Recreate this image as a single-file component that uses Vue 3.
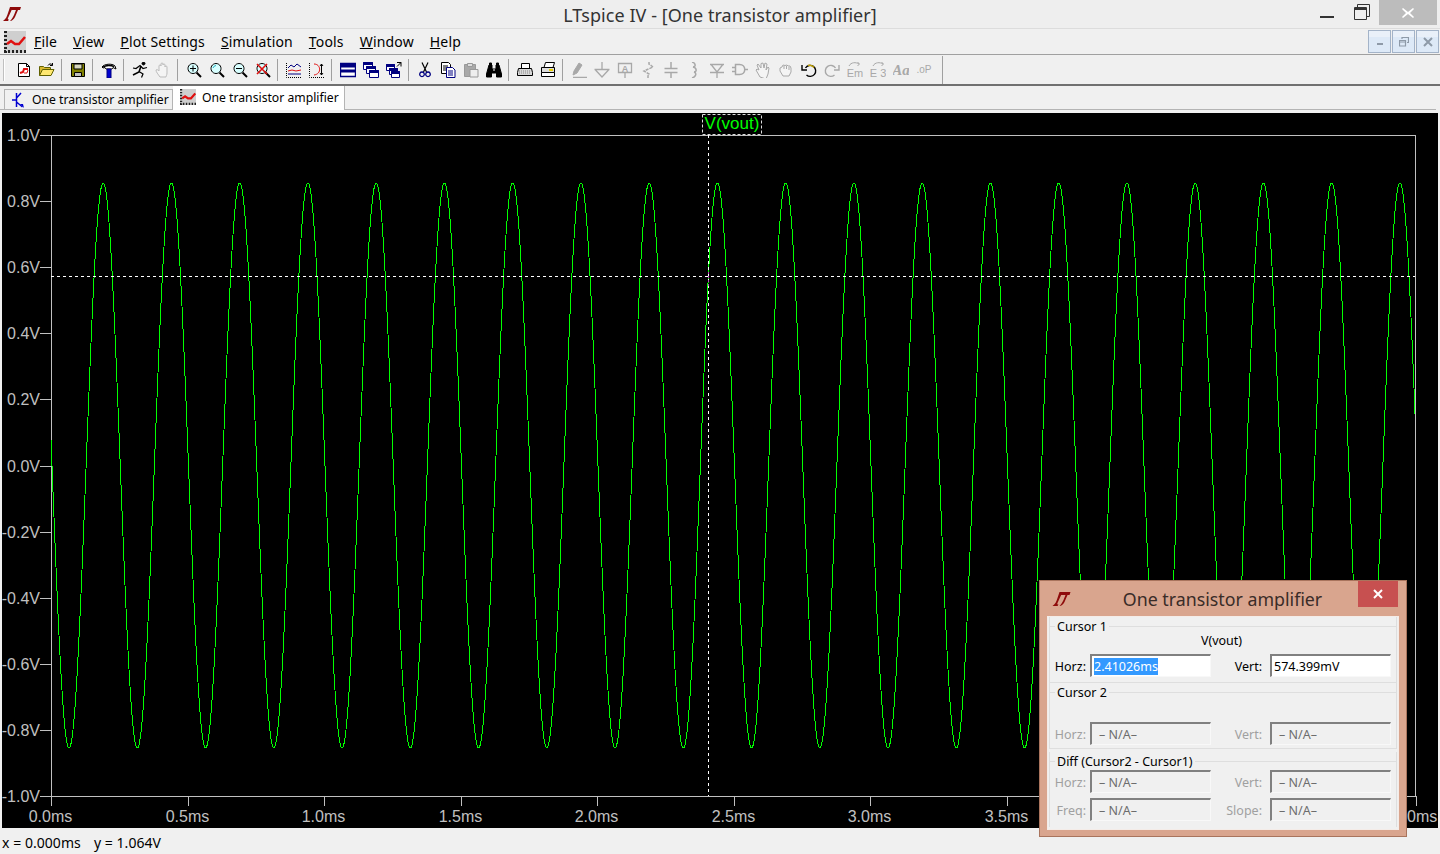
<script setup>
import { computed } from "vue";

const menus = [
    ["F", "ile"],
    ["V", "iew"],
    ["P", "lot Settings"],
    ["S", "imulation"],
    ["T", "ools"],
    ["W", "indow"],
    ["H", "elp"]
];

const GR = "#a8a8a8";
const NV = "#000080";
const CY = "#d8ffff";

const lens = [
    ["M7 1.5a5 5 0 1 0 .01 0z", "#000", CY],
    ["M10.5 10.5l4.5 4.5", "#000", "none", 2]
];

const icons = {
    new: [
        ["M2.5 1.5h8l3 3v10h-11z", "#000", "#fff"],
        ["M10.5 1.5v3h3", "#000", "none"],
        ["M4 11l3-1 1-3h4", "#e01010", "none", 2],
        ["M8 11h3l1-3", "#e01010", "none", 1]
    ],
    open: [
        ["M.5 13.5v-9h4l1 1h6v2", "#606000", "#d8b830"],
        ["M.5 13.5l3-6h11.5l-3 6z", "#606000", "#ffe870"],
        ["M9 3.5c1-2 3-2 4.5-.5", "#000", "none"],
        ["M13.5 1v2.5h-2.5", "#000", "none"]
    ],
    save: [
        ["M1.5 1.5h13v13h-13z", "#000", "#808000"],
        ["M4 2h8v5h-8z", "#000", "#d8d8c0"],
        ["M4.5 10.5h7v4h-7z", "#000", "#c0c0c0"]
    ],
    hammer: [
        ["M1 5c2-3 10-4 13-1l1 3-3-1.5-1 1.5h-6l-1-1.5-2 .5z", "#000", "#fff"],
        ["M2 5c3-2 8-2 11-.5", "#000", "none", 1.5],
        ["M6 7h4v9h-4z", "#000080", "#0000d0"]
    ],
    run: [
        ["M11.5 0a1.5 1.5 0 1 0 .01 0z", "#000", "#000"],
        ["M1 6l3 .5 4-3 3 3 4-1", "#000", "none", 1.2],
        ["M9 4l-2 6-6 3", "#000", "none", 1.6],
        ["M7 9.5l4 2.5-1.5 3.5", "#000", "none", 1.2]
    ],
    hand: [
        ["M5 15c-2-3-4-5-4-7 1-1 2 0 3 1V4a1 1 0 0 1 2 0V2a1 1 0 0 1 2 0V3a1 1 0 0 1 2 0V5a1 1 0 0 1 2 0V11c0 2-1 3-1 4z", "#bbb", "#f4f4f4"]
    ],
    zoomIn: [...lens, ["M4 6.5h6M7 3.5v6", "#000", "none"]],
    zoomFit: [...lens, ["M4 6a3.5 3.5 0 0 1 3-2.5", "#20b0c0", "none"]],
    zoomOut: [...lens, ["M4 6.5h6", "#000", "none"]],
    zoomOff: [...lens, ["M2 2l10 10M12 2l-10 10", "#e01010", "none", 1.6]],
    plotA: [
        ["M.5 1v14.5h15", "#000", "none", 1, "1 1"],
        ["M2 6l3-3 3 2 3-3 4 3", "#000080", "none"],
        ["M2 9l4-1 4 1 5-1", "#e01010", "none"],
        ["M2 12h13", "#000080", "none"]
    ],
    plotB: [
        ["M.5 1v14.5h15", "#000", "none", 1, "1 1"],
        ["M5 2c7 0 8 10 0 11", "#e01010", "none"],
        ["M12.5 2v11M11 4l1.5-2 1.5 2M11 11l1.5 2 1.5-2", "#000", "none"]
    ],
    tile: [
        ["M.5 1.5h15v13h-15z", NV, "#fff", 1.4],
        ["M1 2h14v3h-14zM1 8h14v2h-14z", NV, NV]
    ],
    cascade: [
        ["M.5 .5h9v7h-9z", NV, "#fff"],
        ["M.5 .5h9v2h-9z", NV, NV],
        ["M3.5 4.5h9v7h-9z", NV, "#fff"],
        ["M3.5 4.5h9v2h-9z", NV, NV],
        ["M6.5 8.5h9v7h-9z", NV, "#fff"],
        ["M6.5 8.5h9v2h-9z", NV, NV]
    ],
    cascadeUp: [
        ["M.5 2.5h8v6h-8z", NV, "#fff"],
        ["M.5 2.5h8v2h-8z", NV, NV],
        ["M3.5 6.5h8v6h-8z", NV, "#fff"],
        ["M3.5 6.5h8v2h-8z", NV, NV],
        ["M5.5 9.5h8v6h-8z", NV, "#fff"],
        ["M5.5 9.5h8v2h-8z", NV, NV],
        ["M11 .5h4v4M15 .5l-4 4", "#000", "none"]
    ],
    cut: [
        ["M5 .5l4.5 9.5M11 .5l-4.5 9.5", "#000", "none", 1.2],
        ["M5 10a2.3 2.3 0 1 0 .01 0zM11 10a2.3 2.3 0 1 0 .01 0z", NV, "none", 1.3]
    ],
    copy: [
        ["M1.5 .5h7l2 2v9h-9z", "#000", "#fff"],
        ["M3 4h5M3 6h5M3 8h5", "#000", "none"],
        ["M6.5 5.5h6l2.5 2.5v7.5h-8.5z", NV, "#fff"],
        ["M8 9h5M8 11h5M8 13h5", NV, "none"]
    ],
    paste: [
        ["M1.5 2.5h11v12h-11z", "#999", GR],
        ["M4.5 1.5h5v3h-5z", "#999", "#ddd"],
        ["M7 7.5h8v7.5h-8z", "#999", "#eee"]
    ],
    find: [
        ["M3 3h3v4h4v-4h3l2.5 9v3h-5v-4h-5v4h-5v-3z", "#000", "#000"],
        ["M3.5 1h2v2h-2zM10.5 1h2v2h-2z", "#000", "#000"],
        ["M7 8h2", "#fff", "none"]
    ],
    preview: [
        ["M4.5 1.5h8v5h-8z", "#000", "#fff"],
        ["M1.5 6.5h13l1 4v3h-15v-3z", "#000", "#d8d8d8"],
        ["M2 9h12M2 11h12", "#888", "none", 1, "1 1"]
    ],
    print: [
        ["M5.5 .5h9l-1.5 5h-9z", "#000", "#fff"],
        ["M1.5 5.5h13v5h-13z", "#000", "#ddd"],
        ["M1.5 10.5h13v4h-13z", "#000", "#fff"],
        ["M9 8h4", "#e8d000", "none", 2]
    ],
    wire: [
        ["M2 15.5h14", GR, "none", 1.5],
        ["M2 13l1-4 5-8 3 2-5 8z", GR, GR]
    ],
    ground: [["M8 0v7M.5 7.5h15M1.5 8l6.5 7 6.5-7", GR, "none", 1.3]],
    label: [
        ["M1.5 1.5h13v9h-13zM8 11v5", GR, "none", 1.3],
        { t: "A", x: 8, y: 9.5, size: 9, anchor: "middle" }
    ],
    res: [["M9 0v2l4 3-9 4 5 3-1 2v2", GR, "none", 1.5, "3 1"]],
    cap: [["M8 0v6M1.5 6.5h13M1.5 10.5h13M8 11v5", GR, "none", 1.5]],
    ind: [["M6 0c4 1 4 5 1 5M7 5c4 1 4 5 1 5M8 10c3 1 2 5-2 6", GR, "none", 1.5]],
    diode: [["M1 2.5h14M2.5 3l5.5 7 5.5-7M1 10.5h14M8 11v5", GR, "none", 1.3]],
    comp: [["M3.5 2.5h4c7 0 7 10 0 10h-4zM0 5.5h3.5M0 9.5h3.5M13 7.5h3", GR, "none", 1.5]],
    handOpen: [
        ["M5 15l-4-7 1-1 2 1-2-5 1-1 3 4V1.5l2-.5 1 5 1-5 2 1-1 6 2-3 1 1-1 6-2 5z", GR, "#f4f4f4"]
    ],
    handGrab: [
        ["M5 14l-3-5v-3l2-1 1-2 2 .5 2-.5 1 1 2 0 1 2v4l-2 4z", GR, "#f4f4f4"],
        ["M6 4v3M8.5 4v3M11 5v3", GR, "none"]
    ],
    undo: [
        ["M4.5 6a5.5 5.5 0 1 1 1 7", "#000", "none", 1.4],
        ["M7 3.5a5.5 5.5 0 0 1 6 2", "#c0a000", "none", 1.4],
        ["M1 3v5h5", "#000", "none", 1.4]
    ],
    redo: [
        ["M11.5 6a5.5 5.5 0 1 0-1 7", GR, "none", 1.4],
        ["M15 3v5h-5", GR, "none", 1.4]
    ],
    moveText: [
        ["M2 4c2-4 7-4 10-2", GR, "none"],
        ["M10.5 0l2 2-2 2", GR, "none"],
        { t: "Em", x: 8, y: 14.5, size: 11, anchor: "middle", thin: true }
    ],
    dragText: [
        ["M3 4c2-4 7-4 10-2", GR, "none"],
        ["M11.5 0l2 2-2 2", GR, "none"],
        { t: "E 3", x: 8, y: 14.5, size: 11, anchor: "middle", thin: true }
    ],
    font: [{ t: "Aa", x: 8, y: 13, size: 15, anchor: "middle", italic: true }],
    op: [{ t: ".oP", x: 8, y: 11, size: 10, anchor: "middle", thin: true }]
};

const toolbar = [
    "new", "open", "|", "save", "|", "hammer", "|", "run", "hand", "|",
    "zoomIn", "zoomFit", "zoomOut", "zoomOff", "|", "plotA", "plotB", "|",
    "tile", "cascade", "cascadeUp", "|", "cut", "copy", "paste", "find", "|",
    "preview", "print", "|", "wire", "ground", "label", "res", "cap", "ind",
    "diode", "comp", "handOpen", "handGrab", "undo", "redo", "moveText",
    "dragText", "font", "op", "end"
];

// screen coords of the plot frame
const X0 = 51;
const X1 = 1415;
const Y_TOP = 135;
const Y_BOT = 796;
const PX_PER_MS = 273;

const yTicks = [1, 0.8, 0.6, 0.4, 0.2, 0, -0.2, -0.4, -0.6, -0.8, -1].map((v) => ({
    label: v.toFixed(1) + "V",
    y: Math.round(Y_BOT - ((v + 1) / 2) * (Y_BOT - Y_TOP))
}));

// 4.0ms and 4.5ms sit behind the cursor dialog
const xTicks = [0, 0.5, 1, 1.5, 2, 2.5, 3, 3.5, 5].map((v) => ({
    label: v.toFixed(1) + "ms",
    x: Math.round(X0 + v * PX_PER_MS)
}));

const wave = computed(() => {
    const mid = (Y_TOP + Y_BOT) / 2;
    const amp = (0.855 * (Y_BOT - Y_TOP)) / 2;
    const pts = [];
    for (let x = X0; x <= X1; x++) {
        const t = (x - X0 - 1) / PX_PER_MS;
        pts.push(x + "," + (mid + amp * Math.sin(2 * Math.PI * 4 * t)).toFixed(1));
    }
    return pts.join(" ");
});
</script>

<template>
    <div class="app">
        <header class="titlebar">
            <svg class="logo" viewBox="0 0 18 14" width="18" height="14">
                <path d="M0 14C3 12 4 9 5 6L7 0h3L5 11c-.5 1 0 1.5 1 1.5L5 14z" fill="#8e0b0b" />
                <path d="M9 0h9l-1 3h-2l-3 7c-1 2-3 4-5 4 2-2 3-4 4-6l2-5H8z" fill="#8e0b0b" />
            </svg>
            <div class="title">LTspice IV - [One transistor amplifier]</div>
            <div class="win-controls">
                <span class="win-min"></span>
                <svg class="win-restore" viewBox="0 0 16 16" width="16" height="16">
                    <path d="M3.5 3.5v-3h12v12h-3" fill="none" stroke="#333" />
                    <path d="M.5 3.5h12v12H.5z" fill="none" stroke="#333" />
                    <path d="M1 4h11v2H1z" fill="#333" />
                </svg>
                <span class="win-close">
                    <svg viewBox="0 0 12 10" width="12" height="10">
                        <path d="M1 0l5 4 5-4 1 1-4 4 4 4-1 1-5-4-5 4-1-1 4-4-4-4z" fill="#fff" />
                    </svg>
                </span>
            </div>
        </header>

        <nav class="menubar">
            <svg class="plot-icon" viewBox="0 0 22 22" width="22" height="22">
                <path d="M0 0h22v22H0z" fill="#cfcfcf" />
                <path d="M1.5 0v22M0 20.5h22" stroke="#222" stroke-width="3" stroke-dasharray="2 2" />
                <path d="M3 13l4-3 4 3h4l6-7" fill="none" stroke="#e01010" stroke-width="2.5" />
            </svg>
            <ul class="menu">
                <li v-for="m in menus" :key="m[0]"><u>{{ m[0] }}</u>{{ m[1] }}</li>
            </ul>
            <div class="mdi-buttons">
                <button class="mdi"><i class="mdi-dash"></i></button>
                <button class="mdi">
                    <svg viewBox="0 0 10 10" width="10" height="10">
                        <path d="M3 2V.5h6.5v5H8M.5 3.5h6v5.5h-6zM.5 5h6" fill="none" stroke="#8e9aa8" stroke-width="1.2" />
                    </svg>
                </button>
                <button class="mdi">
                    <svg viewBox="0 0 10 10" width="10" height="10">
                        <path d="M1 1l8 8M9 1l-8 8" stroke="#8e9aa8" stroke-width="2" />
                    </svg>
                </button>
            </div>
        </nav>

        <div class="toolbar">
            <span class="grip"></span>
            <template v-for="(name, i) in toolbar" :key="i">
                <span v-if="name === '|'" class="sep"></span>
                <span v-else-if="name === 'end'" class="toolbar-end"></span>
                <span v-else class="tool">
                    <svg viewBox="0 0 16 16" width="16" height="16">
                        <template v-for="(el, j) in icons[name]" :key="j">
                            <text
                                v-if="el.t"
                                class="icon-text"
                                :class="{ italic: el.italic, thin: el.thin }"
                                :x="el.x"
                                :y="el.y"
                                :font-size="el.size"
                                :text-anchor="el.anchor"
                            >{{ el.t }}</text>
                            <path
                                v-else
                                :d="el[0]"
                                :stroke="el[1]"
                                :fill="el[2]"
                                :stroke-width="el[3] || 1"
                                :stroke-dasharray="el[4]"
                            />
                        </template>
                    </svg>
                </span>
            </template>
        </div>

        <div class="tabstrip">
            <div class="tab">
                <svg viewBox="0 0 14 16" width="14" height="16">
                    <path d="M4.5 1v14M4 8H0M4.5 6L9 1M4.5 10l6 5" fill="none" stroke="#0000d0" stroke-width="1.5" />
                    <path d="M8 12l4 4-1-4z" fill="#0000d0" />
                </svg>
                <span>One transistor amplifier</span>
            </div>
            <div class="tab active">
                <svg viewBox="0 0 22 22" width="16" height="16">
                    <path d="M0 0h22v22H0z" fill="#cfcfcf" />
                    <path d="M1.5 0v22M0 20.5h22" stroke="#222" stroke-width="3" stroke-dasharray="2 2" />
                    <path d="M3 13l4-3 4 3h4l6-7" fill="none" stroke="#e01010" stroke-width="3" />
                </svg>
                <span>One transistor amplifier</span>
            </div>
        </div>

        <main class="plot-area">
            <svg class="plot" viewBox="2 113 1436 715" width="1436" height="715">
                <rect :x="X0 + 0.5" :y="Y_TOP + 0.5" :width="X1 - X0" :height="Y_BOT - Y_TOP" fill="none" stroke="#c0c0c0" />
                <g v-for="t in yTicks" :key="t.label">
                    <path :d="`M40 ${t.y + 0.5}H${X0}`" stroke="#c0c0c0" />
                    <text class="axis" x="40" :y="t.y + 6" text-anchor="end">{{ t.label }}</text>
                </g>
                <g v-for="t in xTicks" :key="t.label">
                    <path :d="`M${t.x + 0.5} ${Y_BOT}v10`" stroke="#c0c0c0" />
                    <text class="axis" :x="t.x - 0.5" y="822" text-anchor="middle">{{ t.label }}</text>
                </g>
                <polyline class="trace" :points="wave" />
                <path class="cursor" d="M708.5 135V796M51 276.5H1415" />
                <path d="M708.5 272v14" stroke="#c040c0" stroke-dasharray="2 2" />
                <rect class="trace-box" x="702.5" y="114.5" width="59" height="20" />
                <text class="trace-name" x="732" y="129" text-anchor="middle">V(vout)</text>
            </svg>

            <section class="cursor-dialog">
                <div class="dialog-head">
                    <svg viewBox="0 0 18 14" width="19" height="14">
                        <path d="M0 14C3 12 4 9 5 6L7 0h3L5 11c-.5 1 0 1.5 1 1.5L5 14z" fill="#8e0b0b" />
                        <path d="M9 0h9l-1 3h-2l-3 7c-1 2-3 4-5 4 2-2 3-4 4-6l2-5H8z" fill="#8e0b0b" />
                    </svg>
                    <span class="dialog-title">One transistor amplifier</span>
                    <span class="dialog-close">
                        <svg viewBox="0 0 10 10" width="10" height="10">
                            <path d="M1 1l8 8M9 1l-8 8" stroke="#fff" stroke-width="2" />
                        </svg>
                    </span>
                </div>
                <div class="dialog-body">
                    <div class="group group-one">
                        <div class="legend"><span>Cursor 1</span></div>
                        <div class="signal">V(vout)</div>
                        <div class="row">
                            <label>Horz:</label>
                            <div class="field"><span class="selected">2.41026ms</span></div>
                            <label>Vert:</label>
                            <div class="field">574.399mV</div>
                        </div>
                    </div>
                    <div class="group group-two">
                        <div class="legend"><span>Cursor 2</span></div>
                        <div class="row off">
                            <label>Horz:</label>
                            <div class="field">– N/A–</div>
                            <label>Vert:</label>
                            <div class="field">– N/A–</div>
                        </div>
                    </div>
                    <div class="group group-diff">
                        <div class="legend"><span>Diff (Cursor2 - Cursor1)</span></div>
                        <div class="row off">
                            <label>Horz:</label>
                            <div class="field">– N/A–</div>
                            <label>Vert:</label>
                            <div class="field">– N/A–</div>
                        </div>
                        <div class="row off">
                            <label>Freq:</label>
                            <div class="field">– N/A–</div>
                            <label>Slope:</label>
                            <div class="field">– N/A–</div>
                        </div>
                    </div>
                </div>
            </section>
        </main>

        <footer class="status">x = 0.000ms &nbsp;&nbsp;<span class="status-y">y = 1.064V</span></footer>
    </div>
</template>

<style>
html,
body {
    margin: 0;
    background: #f0f0f0;
}
</style>

<style scoped>
.app {
    width: 1440px;
    height: 854px;
    display: flex;
    flex-direction: column;
    overflow: hidden;
    background: #f0f0f0;
    color: #000;
    font-family: "Noto Sans", "Liberation Sans", sans-serif;
    font-size: 13px;
}

.titlebar {
    height: 28px;
    flex: none;
    display: grid;
    grid-template-columns: 1fr auto 1fr;
    align-items: start;
    background: #eeeeee;
    border-bottom: 1px solid #dcdcdc;
}

.logo {
    margin: 7px 0 0 3px;
}

.title {
    font-size: 18px;
    letter-spacing: 0.05px;
    line-height: 30px;
    color: #333;
}

.win-controls {
    display: flex;
    justify-content: flex-end;
    align-items: flex-start;
    padding-right: 3px;
}

.win-min {
    width: 14px;
    height: 2px;
    margin: 16px 20px 0 0;
    background: #333;
}

.win-restore {
    margin: 4px 9px 0 0;
}

.win-close {
    width: 58px;
    height: 25px;
    display: flex;
    align-items: center;
    justify-content: center;
    background: #bcbcbc;
}

.menubar {
    height: 25px;
    flex: none;
    display: flex;
    align-items: center;
    padding-left: 4px;
    border-bottom: 1px solid #a0a0a0;
}

.plot-icon {
    flex: none;
}

.menu {
    display: flex;
    gap: 16px;
    list-style: none;
    margin: 0 0 0 8px;
    padding: 0;
    font-size: 14px;
    letter-spacing: 0.16px;
    line-height: 25px;
    flex: 1;
}

.mdi-buttons {
    display: flex;
    gap: 1px;
    margin-right: 1px;
}

.mdi {
    width: 23px;
    height: 23px;
    display: flex;
    align-items: center;
    justify-content: center;
    padding: 0;
    border: 1px solid #a3b3c8;
    background: linear-gradient(#e9f0f9 0 30%, #dde9f7 30%);
}

.mdi-dash {
    width: 6px;
    height: 2px;
    margin-top: 5px;
    background: #8e9aa8;
}

.toolbar {
    height: 29px;
    flex: none;
    display: flex;
    align-items: center;
    border-bottom: 2px solid #707070;
    box-sizing: content-box;
}

.grip {
    width: 1px;
    height: 22px;
    margin: 0 7px 0 3px;
    background: #c0c0c0;
    border-right: 1px solid #fff;
}

.tool {
    width: 23px;
    height: 22px;
    flex: none;
    display: flex;
    align-items: center;
    justify-content: center;
}

.sep {
    width: 1px;
    height: 22px;
    margin: 0 4px 0 3px;
    background: #a0a0a0;
    flex: none;
}

.toolbar-end {
    width: 1px;
    height: 28px;
    margin-left: 7px;
    background: #a0a0a0;
}

.icon-text {
    fill: #a8a8a8;
    font-family: "Liberation Sans", sans-serif;
    font-weight: 700;
}

.icon-text.thin {
    font-weight: 400;
}

.icon-text.italic {
    font-family: "Liberation Serif", serif;
    font-style: italic;
}

.tabstrip {
    height: 23px;
    flex: none;
    display: flex;
    align-items: flex-end;
    margin-right: 4px;
    padding-left: 4px;
    border-bottom: 1px solid #b4b4b4;
}

.tab {
    height: 20px;
    display: flex;
    align-items: center;
    gap: 6px;
    padding: 0 4px 0 7px;
    width: 169px;
    box-sizing: border-box;
    border: 1px solid #b4b4b4;
    border-bottom: 0;
    white-space: nowrap;
    font-size: 12.2px;
}

.tab svg {
    flex: none;
}

.tab.active {
    height: 24px;
    width: 172px;
    margin-bottom: -1px;
    padding-bottom: 2px;
    background: #fff;
    border-width: 0 1px 0 0;
}

.plot-area {
    height: 715px;
    flex: none;
    margin-top: 3px;
    position: relative;
    padding-left: 2px;
}

.plot {
    display: block;
    background: #000;
}

.axis {
    fill: #c0c0c0;
    font-family: "Liberation Sans", sans-serif;
    font-size: 16px;
}

.trace {
    fill: none;
    stroke: #00ff00;
    stroke-width: 1;
    shape-rendering: crispEdges;
}

.cursor {
    fill: none;
    stroke: #fff;
    stroke-dasharray: 3 3;
}

.trace-box {
    fill: none;
    stroke: #ddd;
    stroke-dasharray: 3 2;
}

.trace-name {
    fill: #00ff00;
    font-family: "Liberation Sans", sans-serif;
    font-size: 17px;
}

.status {
    flex: 1;
    padding-left: 2px;
    font-size: 14px;
    letter-spacing: 0.05px;
    line-height: 29px;
    box-shadow: inset 0 -2px 0 #a89a90;
}

.status-y {
    margin-left: 2px;
}

.cursor-dialog {
    position: absolute;
    left: 1039px;
    top: 467px;
    width: 368px;
    height: 257px;
    box-sizing: border-box;
    display: flex;
    flex-direction: column;
    padding: 0 8px 7px;
    background: #d9a58e;
    border: 1px solid #a9745d;
}

.dialog-head {
    height: 36px;
    flex: none;
    display: flex;
    align-items: flex-start;
}

.dialog-head > svg {
    margin: 11px 0 0 4px;
}

.dialog-title {
    flex: 1;
    padding-left: 16px;
    text-align: center;
    font-size: 17.8px;
    line-height: 36px;
    color: #3a2c28;
}

.dialog-close {
    width: 40px;
    height: 26px;
    display: flex;
    align-items: center;
    justify-content: center;
    background: #c75050;
}

.dialog-body {
    flex: 1;
    padding: 0 1px;
    background: #f0f0f0;
    box-shadow: 0 0 0 1px #f4ece8;
}

.group {
    border: 1px solid #dedede;
    border-top: 0;
}

.group-one {
    height: 65px;
}

.group-two {
    height: 65px;
    margin-bottom: 3px;
}

.group-diff {
    height: 75px;
    border-bottom: 0;
}

.legend {
    height: 18px;
    display: flex;
    align-items: center;
    gap: 2px;
    line-height: 18px;
    font-size: 12.5px;
}

.legend span {
    padding-top: 1px;
}

.legend::before {
    content: "";
    width: 5px;
    border-top: 1px solid #dedede;
}

.legend::after {
    content: "";
    flex: 1;
    border-top: 1px solid #dedede;
}

.signal {
    height: 19px;
    text-align: center;
    line-height: 12px;
    padding-right: 3px;
    font-size: 12.5px;
}

.row {
    display: grid;
    grid-template-columns: 36px 121px 51px 121px;
    column-gap: 4px;
    align-items: center;
    font-size: 12.5px;
    height: 23px;
    margin-bottom: 5px;
}

.group-two .row {
    margin-top: 21px;
}

.group-diff .row:first-of-type {
    margin-top: 2px;
}

.row label {
    padding-top: 2px;
    text-align: right;
    white-space: nowrap;
}

.row label:nth-of-type(2) {
    padding-right: 4px;
}

.field {
    height: 23px;
    box-sizing: border-box;
    padding-left: 2px;
    line-height: 21px;
    background: #fff;
    border: 2px solid;
    border-color: #808080 #f8f8f8 #f8f8f8 #808080;
    border-width: 2px 1px 1px 2px;
}

.selected {
    background: #3399ff;
    color: #fff;
}

.off label {
    color: #a0a0a0;
}

.off .field {
    padding-left: 7px;
    background: #f0f0f0;
    color: #6d6d6d;
}
</style>
